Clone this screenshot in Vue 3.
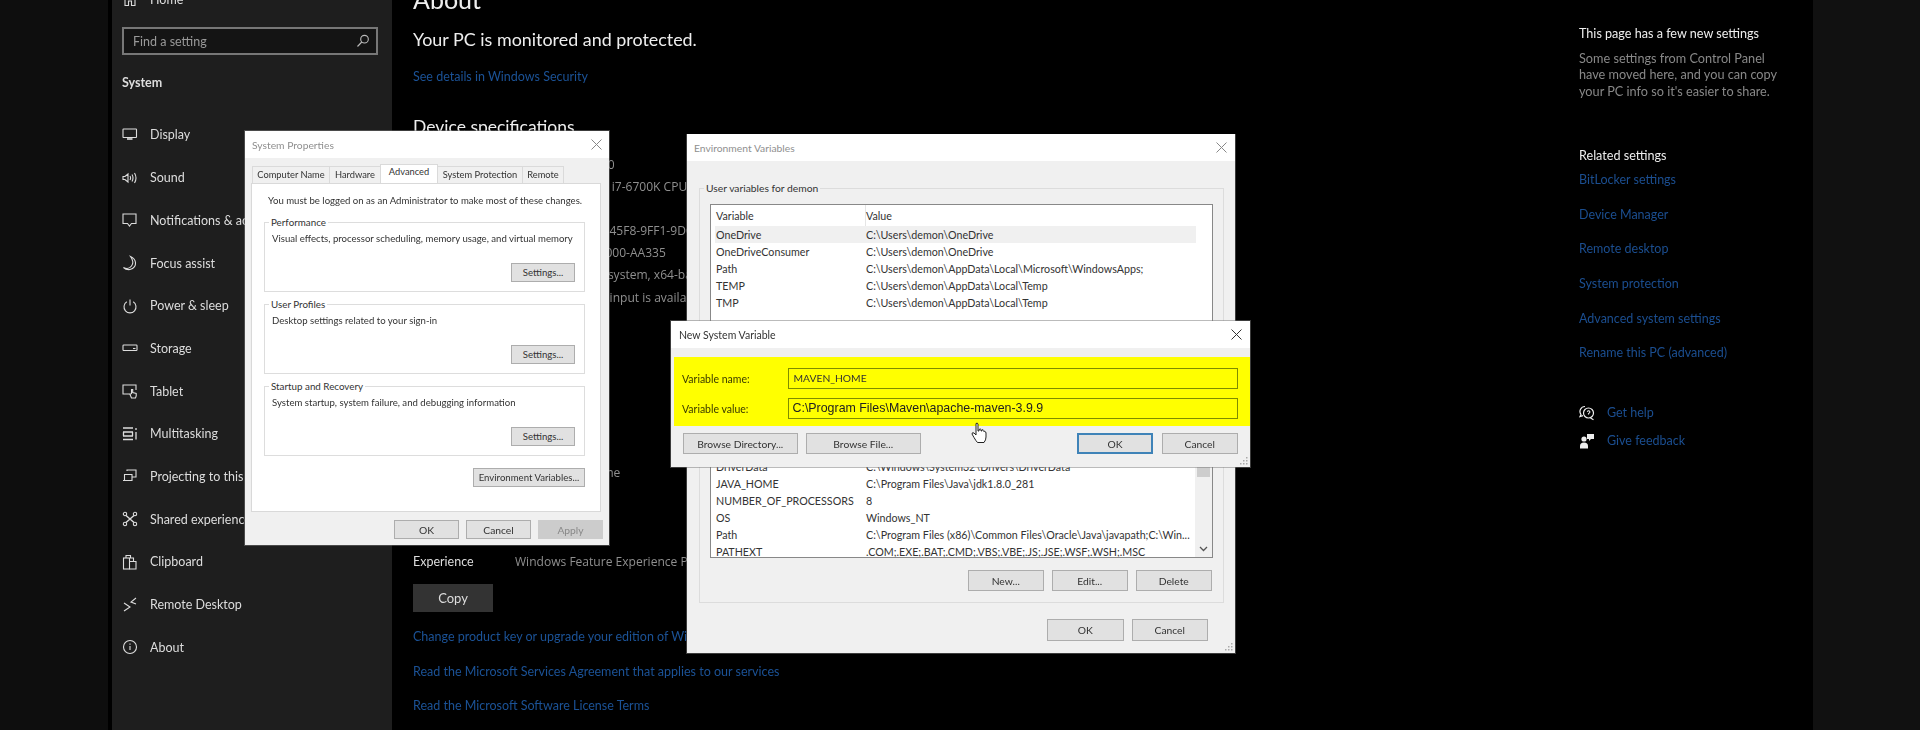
<script setup>
const navItems = [
  { label: 'Display', icon: 'display' },
  { label: 'Sound', icon: 'sound' },
  { label: 'Notifications & actions', icon: 'notif' },
  { label: 'Focus assist', icon: 'focus' },
  { label: 'Power & sleep', icon: 'power' },
  { label: 'Storage', icon: 'storage' },
  { label: 'Tablet', icon: 'tablet' },
  { label: 'Multitasking', icon: 'multi' },
  { label: 'Projecting to this PC', icon: 'project' },
  { label: 'Shared experiences', icon: 'shared' },
  { label: 'Clipboard', icon: 'clip' },
  { label: 'Remote Desktop', icon: 'remote' },
  { label: 'About', icon: 'about' },
]
const specs = [
  ['Device name', 'DESKTOP-7HK2L0'],
  ['Processor', 'Intel(R) Core(TM) i7-6700K CPU @ 4.00GHz'],
  ['Installed RAM', '16.0 GB'],
  ['Device ID', '8C1D24A7-6E2B-45F8-9FF1-9DC31A2B'],
  ['Product ID', '00330-80000-00000-AA335'],
  ['System type', '64-bit operating system, x64-based processor'],
  ['Pen and touch', 'No pen or touch input is available for this display'],
]
const winSpecs = [
  ['Edition', 'Windows 10 Home'],
  ['Version', '20H2'],
  ['Installed on', '1/12/2021'],
  ['OS build', '19042.867'],
  ['Experience', 'Windows Feature Experience Pack 120.2212.551.0'],
]
const related = ['BitLocker settings', 'Device Manager', 'Remote desktop', 'System protection', 'Advanced system settings', 'Rename this PC (advanced)']
const tabs = ['Computer Name', 'Hardware', 'Advanced', 'System Protection', 'Remote']
const groups = [
  { title: 'Performance', text: 'Visual effects, processor scheduling, memory usage, and virtual memory' },
  { title: 'User Profiles', text: 'Desktop settings related to your sign-in' },
  { title: 'Startup and Recovery', text: 'System startup, system failure, and debugging information' },
]
const userVars = [
  ['OneDrive', 'C:\\Users\\demon\\OneDrive'],
  ['OneDriveConsumer', 'C:\\Users\\demon\\OneDrive'],
  ['Path', 'C:\\Users\\demon\\AppData\\Local\\Microsoft\\WindowsApps;'],
  ['TEMP', 'C:\\Users\\demon\\AppData\\Local\\Temp'],
  ['TMP', 'C:\\Users\\demon\\AppData\\Local\\Temp'],
]
const sysVars = [
  ['DriverData', 'C:\\Windows\\System32\\Drivers\\DriverData'],
  ['JAVA_HOME', 'C:\\Program Files\\Java\\jdk1.8.0_281'],
  ['NUMBER_OF_PROCESSORS', '8'],
  ['OS', 'Windows_NT'],
  ['Path', 'C:\\Program Files (x86)\\Common Files\\Oracle\\Java\\javapath;C:\\Win...'],
  ['PATHEXT', '.COM;.EXE;.BAT;.CMD;.VBS;.VBE;.JS;.JSE;.WSF;.WSH;.MSC'],
]
</script>

<template>
  <div class="screen">
    <div class="edge-left"></div>
    <aside class="sidebar">
      <div class="home">
        <svg width="16" height="16" viewBox="0 0 16 16" fill="none" stroke="#ddd" stroke-width="1.1"><path d="M1 8 8 1.500 15 8M3 6.500V14.500H6.500V10H9.500V14.500H13V6.500"/></svg>
        <span>Home</span>
      </div>
      <div class="search">
        <span>Find a setting</span>
        <svg width="14" height="14" viewBox="0 0 14 14" fill="none" stroke="#bbb" stroke-width="1.1"><circle cx="8.500" cy="5.200" r="3.800"/><path d="M5.800 8 1.500 12.500"/></svg>
      </div>
      <div class="system">System</div>
      <nav class="nav">
        <div v-for="item in navItems" :key="item.label" class="nav-row">
          <svg class="nav-icon" width="16" height="16" viewBox="0 0 16 16" fill="none" stroke="#ddd" stroke-width="1.1">
            <template v-if="item.icon === 'display'"><rect x="1" y="2" width="13.500" height="8.500" rx=".6"/><path d="M5 12h5.500" stroke-width="1.600"/></template>
            <template v-else-if="item.icon === 'sound'"><path d="M1 6.500h2L6 4v8L3 9.500H1z"/><path d="M8 6q1.200 2 0 4M10 4.500q2 3.500 0 7M12.500 3q3 5 0 10"/></template>
            <template v-else-if="item.icon === 'notif'"><path d="M1 2h13v9.500H9.500L7.500 14 5.500 11.500H1z"/></template>
            <template v-else-if="item.icon === 'focus'"><path d="M8.500 1.500Q12.500 7 9.500 11T1.500 12.500Q4 15 8 14.500 14 13 13.500 7.500 13 3.500 8.500 1.500z"/></template>
            <template v-else-if="item.icon === 'power'"><path d="M8 1.500v6"/><path d="M4.800 3.800a6 6 0 1 0 6.400 0"/></template>
            <template v-else-if="item.icon === 'storage'"><rect x="1" y="5" width="14" height="5.500" rx=".8"/><path d="M11 8.500h2.500"/></template>
            <template v-else-if="item.icon === 'tablet'"><path d="M8 11H1V2h13v5"/><path d="M9.500 15 8 11.500 9.500 10.500V6.500h1.200v3l3.500 1v2.500L13.500 15z"/></template>
            <template v-else-if="item.icon === 'multi'"><path d="M1 2h10M1 13.500h10M1 6h10M1 10h10M1.500 6v4M10.500 6v4M14 2v2M14 6v7.500" stroke-width="1.300"/></template>
            <template v-else-if="item.icon === 'project'"><path d="M5 3V2h9v7H10"/><path d="M1 12.500h9v-6H2.500v6"/></template>
            <template v-else-if="item.icon === 'shared'"><circle cx="3" cy="3" r="1.700"/><circle cx="13" cy="3" r="1.700"/><circle cx="3" cy="13" r="1.700"/><circle cx="13" cy="13" r="1.700"/><path d="M4 4.500 12 11.500M12 4.500 4 11.500" stroke-width="1.400"/></template>
            <template v-else-if="item.icon === 'clip'"><rect x="1.500" y="4" width="6" height="11"/><path d="M7.500 7.500h6.500V15H7.500M4 4V1.500h4.500V4h3v3"/></template>
            <template v-else-if="item.icon === 'remote'"><path d="M2 6 8 10 2 14M14 1 9 5 14 7"/></template>
            <template v-else><circle cx="8" cy="8" r="6.500"/><path d="M8 7v4M8 4.500v1.200"/></template>
          </svg>
          <span>{{ item.label }}</span>
        </div>
      </nav>
    </aside>

    <main class="main">
      <h1>About</h1>
      <p class="protected">Your PC is monitored and protected.</p>
      <a class="link details">See details in Windows Security</a>
      <h2>Device specifications</h2>
      <div class="specs">
        <div v-for="row in specs" :key="row[0]" class="spec-row"><span class="spec-k">{{ row[0] }}</span><span class="spec-v">{{ row[1] }}</span></div>
      </div>
      <h2 class="win-h">Windows specifications</h2>
      <div class="specs">
        <div v-for="row in winSpecs" :key="row[0]" class="spec-row"><span class="spec-k">{{ row[0] }}</span><span class="spec-v">{{ row[1] }}</span></div>
      </div>
      <button class="copy">Copy</button>
      <a class="link foot">Change product key or upgrade your edition of Windows</a>
      <a class="link foot">Read the Microsoft Services Agreement that applies to our services</a>
      <a class="link foot">Read the Microsoft Software License Terms</a>
    </main>

    <aside class="rail">
      <div class="rail-title">This page has a few new settings</div>
      <p class="rail-text">Some settings from Control Panel have moved here, and you can copy your PC info so it's easier to share.</p>
      <div class="rail-title related">Related settings</div>
      <a v-for="r in related" :key="r" class="link rail-link">{{ r }}</a>
      <div class="help first">
        <svg width="16" height="16" viewBox="0 0 16 16" fill="none" stroke="#eee" stroke-width="1.200"><path d="M6 1.500a5 5 0 0 0-4 8L1 11.500l3-.8"/><circle cx="9.500" cy="8" r="5"/><path d="M11.500 13l3 1.800"/><path d="M8.200 6.800q1.300-1.800 2.600-.4.500 1-1.300 2.200v1" stroke-width="1.100"/></svg>
        <a class="link">Get help</a>
      </div>
      <div class="help">
        <svg width="16" height="16" viewBox="0 0 16 16" fill="#eee"><circle cx="5" cy="6" r="2.600"/><path d="M1 15.500v-2.500q0-3.500 4-3.500t4 3.500v2.500z"/><path d="M8 1h7v5h-3l-2 2V6H8z"/></svg>
        <a class="link">Give feedback</a>
      </div>
    </aside>
    <div class="edge-right"></div>

    <section class="win win-sys">
      <header class="titlebar">
        <span class="faded">System Properties</span>
        <svg class="x" width="11" height="11" viewBox="0 0 11 11" stroke="#888" stroke-width="1"><path d="M.5.500l10 10M10.500.500l-10 10"/></svg>
      </header>
      <div class="tabs">
        <span v-for="(t, i) in tabs" :key="t" class="tab" :class="['t' + i, { active: i === 2 }]">{{ t }}</span>
      </div>
      <div class="tab-panel">
        <p class="admin">You must be logged on as an Administrator to make most of these changes.</p>
        <div v-for="g in groups" :key="g.title" class="grp">
          <span class="legend">{{ g.title }}</span>
          <p>{{ g.text }}</p>
          <button class="btn settings">Settings...</button>
        </div>
        <button class="btn envbtn">Environment Variables...</button>
      </div>
      <div class="win-foot sys-foot">
        <button class="btn b65">OK</button>
        <button class="btn b65">Cancel</button>
        <button class="btn b65 disabled">Apply</button>
      </div>
    </section>

    <section class="win win-env">
      <header class="titlebar">
        <span class="faded">Environment Variables</span>
        <svg class="x" width="11" height="11" viewBox="0 0 11 11" stroke="#888" stroke-width="1"><path d="M.5.500l10 10M10.500.500l-10 10"/></svg>
      </header>
      <div class="env-body">
        <div class="env-grp user">
          <span class="legend">User variables for demon</span>
          <div class="list list-user">
            <div class="list-head"><span class="c1">Variable</span><span class="c2">Value</span></div>
            <div v-for="(v, i) in userVars" :key="v[0]" class="list-row" :class="{ sel: i === 0 }"><span class="c1">{{ v[0] }}</span><span class="c2">{{ v[1] }}</span></div>
          </div>
        </div>
        <div class="env-grp sysv">
          <span class="legend">System variables</span>
          <div class="list list-sys">
            <div v-for="v in sysVars" :key="v[0] + v[1]" class="list-row"><span class="c1">{{ v[0] }}</span><span class="c2">{{ v[1] }}</span></div>
            <div class="scroll">
              <span class="thumb"></span>
              <svg width="9" height="6" viewBox="0 0 9 6" fill="none" stroke="#555" stroke-width="1.300"><path d="M1 1l3.500 3.500L8 1"/></svg>
            </div>
          </div>
          <div class="env-actions">
            <button class="btn b76">New...</button>
            <button class="btn b76">Edit...</button>
            <button class="btn b76">Delete</button>
          </div>
        </div>
        <div class="win-foot env-foot">
          <button class="btn b76 tall">OK</button>
          <button class="btn b76 tall">Cancel</button>
        </div>
      </div>
      <svg class="grip" width="9" height="9" viewBox="0 0 9 9" fill="#aaa"><path d="M7 1h1.500v1.500H7zM4 4h1.500v1.500H4zM7 4h1.500v1.500H7zM1 7h1.500v1.500H1zM4 7h1.500v1.500H4zM7 7h1.500v1.500H7z"/></svg>
    </section>

    <section class="win win-new">
      <header class="titlebar new-title">
        <span>New System Variable</span>
        <svg class="x dark" width="11" height="11" viewBox="0 0 11 11" stroke="#333" stroke-width="1"><path d="M.5.500l10 10M10.500.500l-10 10"/></svg>
      </header>
      <div class="yellow">
        <div class="field"><label>Variable name:</label><div class="input name">MAVEN_HOME</div></div>
        <div class="field"><label>Variable value:</label><div class="input value">C:\Program Files\Maven\apache-maven-3.9.9</div></div>
      </div>
      <div class="new-actions">
        <button class="btn browse">Browse Directory...</button>
        <button class="btn browse">Browse File...</button>
        <span class="spacer"></span>
        <button class="btn ok-primary">OK</button>
        <button class="btn b76">Cancel</button>
      </div>
      <svg class="grip" width="9" height="9" viewBox="0 0 9 9" fill="#aaa"><path d="M7 1h1.500v1.500H7zM4 4h1.500v1.500H4zM7 4h1.500v1.500H7zM1 7h1.500v1.500H1zM4 7h1.500v1.500H4zM7 7h1.500v1.500H7z"/></svg>
      <svg class="cursor" width="16" height="22" viewBox="0 0 16 22" fill="#fff" stroke="#222" stroke-width="1"><path d="M5 1.500q1.500-1 2 .5v7l1 0V7.500q1.500-1 2 0V9h.8V8q1.500-.8 2 .5v1l.7 0q1.500 0 1.500 1.500v4q0 3-2 5.500H6.500Q5 19 3 15.500L1 12q0-2 2-1l2 2z"/></svg>
    </section>
  </div>
</template>

<style>
html, body { margin: 0; background: #000; }
</style>

<style scoped>
.screen {
  width: 1920px; height: 730px; background: #000; overflow: hidden; position: relative;
  display: flex; font-family: Lato, "Open Sans", sans-serif; color: #fff;
}
.edge-left { width: 108px; background: #0e0e0e; border-right: 4px solid #000; flex: none; }
.sidebar { width: 280px; flex: none; background: #1e1e1e; padding: 0 10px; box-sizing: border-box; font-size: 12.500px; color: #ddd; filter: blur(.4px); }
.home { margin-top: -9px; height: 36px; line-height: 18px; display: flex; gap: 12px; align-items: flex-start; }
.search {
  width: 256px; height: 28px; box-sizing: border-box; border: 2px solid #777; background: #141414;
  display: flex; align-items: center; justify-content: space-between; padding: 0 6px 0 9px; color: #999; font-size: 12.500px;
}
.system { font-weight: 700; font-size: 12.500px; margin-top: 19px; height: 18px; line-height: 18px; color: #ddd; }
.nav { margin-top: 21.600px; }
.nav-row { height: 42.700px; display: flex; align-items: center; gap: 12px; white-space: nowrap; }
.nav-icon { flex: none; }

.main { width: 1150px; flex: none; padding-left: 21px; box-sizing: border-box; filter: blur(.4px); }
h1 { font-size: 25px; font-weight: 400; margin: -20px 0 0; height: 38px; line-height: 38px; color: #eee; }
.protected { font-size: 17.900px; margin: 9px 0 0; line-height: 24px; color: #eee; }
.link { color: #1b5296; font-size: 12.500px; display: block; line-height: 18px; white-space: nowrap; }
.details { margin-top: 17px; }
h2 { font-size: 17.500px; font-weight: 400; margin: 28px 0 0; line-height: 26px; color: #eee; }
.win-h { margin-top: 117.300px; }
h2 + .specs { margin-top: 14px; }
.win-h + .specs { margin-top: 10.500px; }
.spec-row { display: flex; height: 22.100px; line-height: 22px; font-size: 12.500px; white-space: nowrap; }
.spec-k { width: 102px; flex: none; color: #ddd; }
.spec-v { color: #8f8f8f; font-family: "Open Sans", sans-serif; font-size: 12.050px; }
.copy { display: block; width: 80px; height: 28px; background: #333; border: 0; color: #ddd; font: inherit; font-size: 13px; margin-top: 11px; }
.foot { margin-top: 16.300px; }

.rail { width: 271px; flex: none; padding: 25px 0 0 37px; box-sizing: border-box; filter: blur(.35px); }
.rail-title { color: #eee; font-size: 12.600px; line-height: 18px; white-space: nowrap; }
.rail-text { margin: 6.700px 0 0; color: #888; line-height: 16.500px; font-size: 12.700px; width: 215px; }
.related { margin-top: 47.700px; }
.rail-link { margin-top: 16.700px; color: #1b4e90; }
.related + .rail-link { margin-top: 6px; }
.help { display: flex; align-items: center; gap: 12px; height: 27.500px; }
.help.first { margin-top: 37px; }
.help .link { color: #1b4e90; }
.edge-right { flex: 1; background: #111; }

.win {
  position: absolute; background: #f0f0f0; color: #333; font-size: 9.600px;
  box-sizing: border-box; filter: blur(.35px); box-shadow: 0 0 0 1px rgba(120,120,120,.5);
}
.titlebar { background: #fff; display: flex; align-items: center; justify-content: space-between; height: 27px; font-size: 10.300px; }
.faded { color: #8f8f8f; }
.x { flex: none; }
.btn { font: inherit; color: #333; background: #e1e1e1; border: 1px solid #adadad; padding: 0; box-sizing: border-box; white-space: nowrap; display: block; }
.legend { position: absolute; top: -8px; left: 4px; background: #fff; padding: 0 2px; line-height: 14px; white-space: nowrap; font-size: 9.800px; }
.grip { position: absolute; right: 2px; bottom: 2px; }

.win-sys { left: 245px; top: 131px; width: 364px; height: 414px; }
.win-sys .titlebar { padding: 0 7px; }
.tabs { display: flex; align-items: flex-end; padding-left: 7px; height: 25px; }
.tab { height: 17px; line-height: 16px; text-align: center; border: 1px solid #dadada; border-bottom: 0; box-sizing: border-box; margin-right: -1px; white-space: nowrap; font-size: 9.300px; }
.tab.active { height: 19px; background: #fff; line-height: 14px; position: relative; z-index: 1; }
.t0 { width: 78px; }
.t1 { width: 52px; }
.t2 { width: 58px; }
.t3 { width: 86px; }
.t4 { width: 42px; }
.tab-panel { margin: 0 8px 0 6px; height: 329px; background: #fff; border: 1px solid #d9d9d9; box-sizing: border-box; padding: 9px 15px 0 12px; }
.admin { margin: 0 0 13px 4px; line-height: 16px; height: 16px; white-space: nowrap; }
.grp { border: 1px solid #ddd; padding: 0 0 0 7px; height: 69.500px; margin-bottom: 12.500px; box-sizing: border-box; position: relative; }
.grp p { margin: 9px 0 0; line-height: 14px; white-space: nowrap; }
.settings { position: absolute; right: 9px; bottom: 9px; width: 64px; height: 19px; }
.envbtn { margin-left: auto; width: 112px; height: 19px; }
.win-foot { display: flex; }
.sys-foot { justify-content: flex-end; gap: 7px; padding: 8px 6px 0 0; }
.b65 { width: 65px; height: 19px; font-size: 10.300px; }
.disabled { background: #ccc; border-color: #ccc; color: #888; }

.win-env { left: 687px; top: 135px; width: 548px; height: 518px; }
.win-env .titlebar { padding: 0 8px 0 7px; margin-top: -1px; }
.env-body { padding: 27px 11px 0 12px; }
.env-grp { border: 1px solid #dcdcdc; padding: 0 10px; box-sizing: border-box; position: relative; }
.env-grp .legend { background: #f0f0f0; left: 4px; font-size: 10.300px; }
.user { height: 150px; }
.sysv { margin-top: 12px; padding: 10px 11px 11px 10px; }
.list { background: #fff; border: 1px solid #888; box-sizing: border-box; width: 503px; height: 197px; overflow: hidden; position: relative; font-size: 10.700px; }
.list-user { margin-top: 15px; height: 250px; }
.list-head { display: flex; height: 21px; width: 485px; align-items: center; padding-left: 5px; box-sizing: border-box; }
.list-head .c1 { border-right: 1px solid #e5e5e5; line-height: 21px; box-sizing: border-box; }
.list-row { display: flex; height: 17px; flex: none; line-height: 17px; align-items: center; white-space: nowrap; padding-left: 5px; }
.c1 { width: 150px; flex: none; }
.sel { background: #f0f0f0; width: 480px; margin-left: 4px; padding-left: 1px; }
.list-sys { display: flex; flex-direction: column; justify-content: flex-end; }
.list-sys .list-row:nth-last-child(2) { margin-bottom: -3px; }
.scroll { position: absolute; right: 0; top: 0; bottom: 0; width: 17px; background: #f0f0f0; display: flex; flex-direction: column; align-items: center; justify-content: flex-end; padding-bottom: 5px; box-sizing: border-box; }
.thumb { position: absolute; bottom: 80px; left: 2px; width: 13px; height: 30px; background: #cdcdcd; }
.env-actions { display: flex; justify-content: flex-end; gap: 7.500px; margin-top: 12px; }
.b76 { width: 76.500px; height: 21px; font-size: 10.300px; }
.tall { height: 22px; }
.env-foot { justify-content: flex-end; gap: 8px; padding: 16px 16px 0 0; }

.win-new { left: 671px; top: 321px; width: 579px; height: 146px; font-size: 10.300px; }
.new-title { padding: 0 8px 0 8px; color: #333; font-size: 10.500px; }
.yellow { margin: 9px 0 0 3px; height: 69px; background: #ff0; box-sizing: border-box; padding: 11px 12.500px 0 8px; display: flex; flex-direction: column; gap: 9px; }
.field { display: flex; align-items: center; height: 21px; }
.field label { width: 105.500px; flex: none; color: #3a3a00; font-size: 10.500px; }
.input { flex: 1; height: 21px; box-sizing: border-box; border: 1px solid #7f8c00; line-height: 19px; padding-left: 5px; color: #333; }
.value { font-family: "Liberation Sans", sans-serif; font-size: 12.400px; color: #222; padding-left: 4px; }
.new-actions { display: flex; align-items: flex-start; padding: 7px 12px 0 12px; gap: 8.500px; }
.spacer { flex: 1; }
.browse { width: 114.500px; height: 21px; }
.ok-primary { width: 76px; height: 21px; border: 2px solid #3f83b8; font-size: 10.300px; }
.cursor { position: absolute; left: 300px; top: 101px; }
</style>
